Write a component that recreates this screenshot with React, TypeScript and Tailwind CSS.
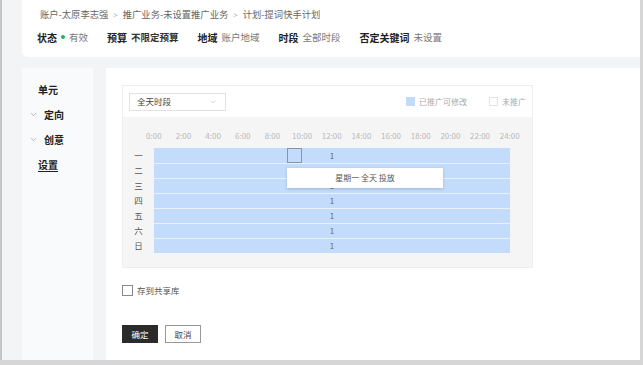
import { ChevronDown } from 'lucide-react';

const hours = ['0:00', '2:00', '4:00', '6:00', '8:00', '10:00', '12:00', '14:00', '16:00', '18:00', '20:00', '22:00', '24:00'];
const days = ['一', '二', '三', '四', '五', '六', '日'];

const status = [
  { label: '状态', value: '有效', dot: true },
  { label: '预算', value: '不限定预算', strong: true },
  { label: '地域', value: '账户地域' },
  { label: '时段', value: '全部时段' },
  { label: '否定关键词', value: '未设置' },
];

function SideItem({ label, caret, active }: { label: string; caret?: boolean; active?: boolean }) {
  return (
    <div className={caret ? 'flex items-center h-[25px] pl-[7px]' : 'flex items-center h-[25px] pl-[16px]'}>
      {caret && <ChevronDown size={9} strokeWidth={1.5} className="text-[#888] mr-[6px]" />}
      <span className={active ? 'text-[10px] font-bold text-[#222] border-b border-[#222] leading-[13px]' : 'text-[10px] font-bold text-[#222]'}>
        {label}
      </span>
    </div>
  );
}

export default function App() {
  return (
    <div
      className="w-[643px] h-[365px] bg-[#d6d6d6] overflow-hidden"
      style={{ fontFamily: '"Noto Sans CJK SC", "Noto Sans", sans-serif' }}
    >
      <div className="w-[640px] h-[360px] border-l-2 border-[#c6c6c6] bg-[#f3f4f6] flex flex-col">
        {/* header card */}
        <div className="ml-[20px] h-[57px] bg-white rounded-bl-md pl-[18px] pt-[7px] shrink-0">
          <div className="flex items-center text-[9.3px] text-[#666] h-[16px]">
            <span>账户-太原李志强</span>
            <span className="mx-[5px] text-[#aaa] text-[8px]">&gt;</span>
            <span>推广业务-未设置推广业务</span>
            <span className="mx-[5px] text-[#aaa] text-[8px]">&gt;</span>
            <span>计划-提词快手计划</span>
          </div>
          <div className="flex items-center gap-[19px] mt-[6px] h-[16px] -ml-[3px]">
            {status.map((s) => (
              <div key={s.label} className="flex items-center gap-[4px]">
                <span className="text-[10px] font-bold text-[#222]">{s.label}</span>
                {s.dot && <span className="w-[4px] h-[4px] rounded-full bg-[#22b35e]" />}
                <span className={s.strong ? 'text-[9.5px] font-bold text-[#333]' : 'text-[9.5px] text-[#777]'}>
                  {s.value}
                </span>
              </div>
            ))}
          </div>
        </div>

        <div className="flex-1 flex gap-[13px] ml-[20px] mt-[11px]">
          {/* sidebar */}
          <div className="w-[71px] bg-[#f9fafc] pt-[9px]">
            <SideItem label="单元" />
            <SideItem label="定向" caret />
            <SideItem label="创意" caret />
            <SideItem label="设置" active />
          </div>

          {/* main */}
          <div className="flex-1 bg-white pl-[16px] pt-[17px]">
            <div className="w-[411px] h-[183px] border border-[#eeeeee] flex flex-col">
              <div className="h-[31px] bg-white flex items-center justify-between pl-[6px] pr-[6px] shrink-0">
                <div className="w-[97px] h-[18px] border border-[#e2e2e2] flex items-center justify-between pl-[7px] pr-[8px]">
                  <span className="text-[8.5px] text-[#444]">全天时段</span>
                  <ChevronDown size={8} strokeWidth={1.2} className="text-[#999]" />
                </div>
                <div className="flex items-center">
                  <span className="w-[9px] h-[9px] bg-[#c2dbfb]" />
                  <span className="text-[8px] text-[#aaa] ml-[4px]">已推广可修改</span>
                  <span className="w-[9px] h-[9px] border border-[#e4e4e4] bg-white ml-[22px]" />
                  <span className="text-[8px] text-[#aaa] ml-[4px]">未推广</span>
                </div>
              </div>
              <div className="flex-1 bg-[#f5f5f5] pt-[13px]">
                <div className="flex ml-[16px] h-[12px] items-center">
                  {hours.map((h) => (
                    <span key={h} className="w-[29.67px] text-center text-[8px] text-[#b8b8b8]">
                      {h}
                    </span>
                  ))}
                </div>
                <div className="flex mt-[6px]">
                  <div className="w-[31px] flex flex-col">
                    {days.map((d) => (
                      <div key={d} className="h-[15px] flex items-center justify-center text-[8.5px] text-[#555]">
                        {d}
                      </div>
                    ))}
                  </div>
                  <div className="relative w-[356px] flex flex-col">
                    {days.map((d, i) => (
                      <div
                        key={d}
                        className={
                          i === 0
                            ? 'h-[15px] bg-[#c3dcfb] flex items-center justify-center text-[8px] text-[#666]'
                            : 'h-[15px] bg-[#c3dcfb] border-t-[1.5px] border-[#e8f1fd] flex items-center justify-center text-[8px] text-[#666]'
                        }
                      >
                        1
                      </div>
                    ))}
                    <div className="absolute left-[133px] top-0 w-[15px] h-[15px] border border-[#8a95a3]" />
                    <div className="absolute left-[133px] top-[20px] w-[156px] h-[20px] bg-white shadow-[0_1px_3px_rgba(0,0,0,0.18)] flex items-center justify-center text-[8px] text-[#555]">
                      星期一 全天 投放
                    </div>
                  </div>
                </div>
              </div>
            </div>

            <label className="flex items-center mt-[16px] h-[12px]">
              <span className="w-[11px] h-[11px] border border-[#888] bg-white" />
              <span className="text-[8.5px] text-[#555] ml-[4px]">存到共享库</span>
            </label>

            <div className="flex gap-[7px] mt-[29px]">
              <button className="w-[36px] h-[18px] bg-[#2b2b2b] text-white text-[8.5px]">确定</button>
              <button className="w-[36px] h-[18px] border border-[#999] bg-white text-[#444] text-[8.5px]">取消</button>
            </div>
          </div>
        </div>
      </div>
    </div>
  );
}
